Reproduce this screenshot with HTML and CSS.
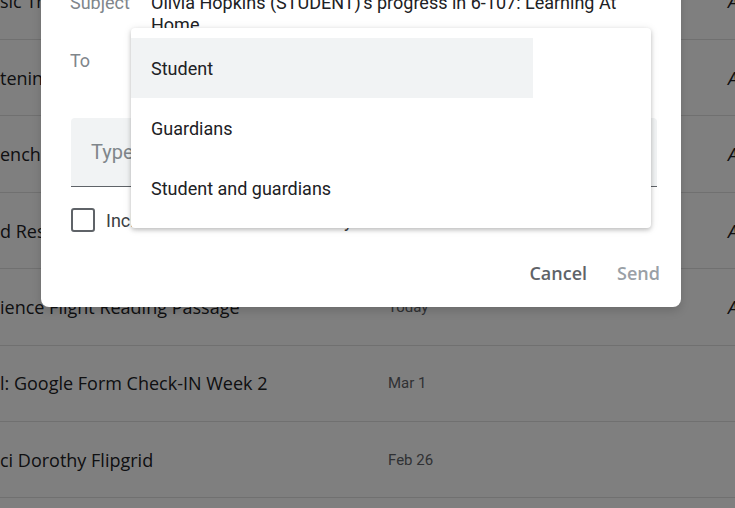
FILE: index.html
```html
<!DOCTYPE html>
<html>
<head>
<meta charset="utf-8">
<link rel="stylesheet" href="styles.css">
</head>
<body>
<div class="list">
  <div class="row"><div class="title">sic Trivia Game</div><div class="date">Today</div><div class="status">A</div></div>
  <div class="row"><div class="title">tening Activity</div><div class="date">Today</div><div class="status">A</div></div>
  <div class="row"><div class="title">ench Quiz</div><div class="date">Today</div><div class="status">A</div></div>
  <div class="row"><div class="title">d Response Journal</div><div class="date">Today</div><div class="status">A</div></div>
  <div class="row"><div class="title">ience Flight Reading Passage</div><div class="date">Today</div><div class="status">A</div></div>
  <div class="row"><div class="title">l: Google Form Check-IN Week 2</div><div class="date">Mar 1</div><div class="status"></div></div>
  <div class="row"><div class="title">ci Dorothy Flipgrid</div><div class="date">Feb 26</div><div class="status"></div></div>
</div>
<div class="scrim"></div>
<div class="dialog">
  <div class="field">
    <div class="label">Subject</div>
    <div class="value">Olivia Hopkins (STUDENT)'s progress in 6-107: Learning At Home</div>
  </div>
  <div class="field to">
    <div class="label">To</div>
    <div class="value"></div>
  </div>
  <div class="textarea"><span class="placeholder">Type a message</span></div>
  <label class="check">
    <span class="box"></span>
    <span class="check-text">Include student work summary</span>
  </label>
  <div class="actions">
    <button class="btn cancel">Cancel</button>
    <button class="btn send">Send</button>
  </div>
  <div class="menu">
    <div class="item active">Student</div>
    <div class="item">Guardians</div>
    <div class="item">Student and guardians</div>
  </div>
</div>
</body>
</html>
```
FILE: styles.css
```css
html, body {
  margin: 0;
  padding: 0;
  width: 735px;
  height: 508px;
  overflow: hidden;
  background: #ffffff;
}
body {
  position: relative;
  font-family: Roboto, "Liberation Sans", sans-serif;
}
.list {
  margin-top: -36.3px;
}
.row {
  display: flex;
  align-items: center;
  height: 76.4px;
  box-sizing: border-box;
  border-bottom: 1px solid #e0e0e0;
  color: #3c4043;
}
.title {
  width: 388px;
  flex: 0 0 388px;
  font-family: "Open Sans", sans-serif;
  font-weight: 500;
  font-size: 18px;
  white-space: nowrap;
  overflow: hidden;
  color: #202124;
}
.date {
  width: 340px;
  flex: 0 0 340px;
  font-size: 15px;
  color: #5f6368;
}
.status {
  font-family: "Open Sans", sans-serif;
  font-size: 18px;
  font-style: italic;
  color: #202124;
}
.scrim {
  position: absolute;
  inset: 0;
  background: rgba(0, 0, 0, 0.5);
}
.dialog {
  position: absolute;
  left: 41px;
  top: -20px;
  width: 640px;
  box-sizing: border-box;
  padding: 12px 24px 16px 29px;
  background: #fff;
  border-radius: 0 0 8px 8px;
  box-shadow: 0 4px 10px rgba(0,0,0,0.15);
}
.field {
  display: flex;
  font-size: 18px;
  line-height: 22px;
}
.label {
  flex: 0 0 81px;
  color: #80868b;
}
.value {
  flex: 1;
  color: #202124;
}
.field.to {
  height: 48px;
  align-items: center;
  margin-top: 1px;
}
.textarea {
  margin-top: 33px;
  margin-left: 1px;
  height: 68px;
  background: #f1f3f4;
  border-radius: 4px 4px 0 0;
  border-bottom: 1px solid #5f6368;
  display: flex;
  align-items: center;
  padding-left: 20px;
}
.placeholder {
  font-size: 20px;
  color: #80868b;
}
.check {
  display: flex;
  align-items: center;
  margin-top: 21px;
  margin-left: 1px;
  height: 24px;
}
.box {
  width: 24px;
  height: 24px;
  box-sizing: border-box;
  border: 2px solid #5f6368;
  border-radius: 3px;
  margin-right: 11px;
}
.check-text {
  font-size: 18px;
  color: #3c4043;
}
.actions {
  display: flex;
  justify-content: flex-end;
  gap: 14px;
  margin-top: 23px;
  margin-right: -11px;
}
.btn {
  font-family: "Open Sans", sans-serif;
  font-weight: 600;
  font-size: 18px;
  background: none;
  border: none;
  height: 36px;
  padding: 0 8px;
}
.cancel { color: #5f6368; }
.send { color: #9aa0a6; }
.menu {
  position: absolute;
  left: 90px;
  top: 48px;
  width: 520px;
  padding: 10px 0;
  background: #fff;
  border-radius: 4px;
  box-shadow: 0 2px 4px rgba(0,0,0,0.2), 0 1px 8px rgba(0,0,0,0.1);
}
.item {
  width: 402px;
  height: 60px;
  box-sizing: border-box;
  padding-left: 20px;
  display: flex;
  align-items: center;
  font-size: 18px;
  color: #202124;
}
.item.active {
  background: #f1f3f4;
}
```
